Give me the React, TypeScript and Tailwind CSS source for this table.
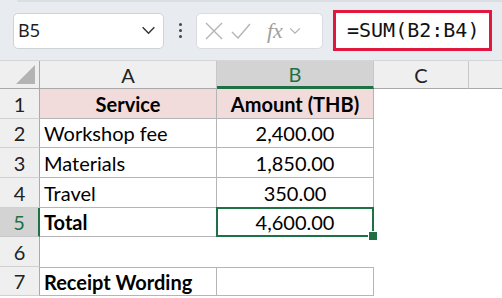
import React from "react";

const CELL_FONT = { fontFamily: "Lato, 'Noto Sans', sans-serif" };

type Row = {
  n: number;
  h: string;
  a?: string;
  b?: string;
  bold?: boolean;
  head?: boolean;
  bordered: boolean;
  selected?: boolean;
  topBorder?: boolean;
};

const rows: Row[] = [
  { n: 1, h: "h-[30px]", a: "Service", b: "Amount (THB)", bold: true, head: true, bordered: true },
  { n: 2, h: "h-[29px]", a: "Workshop fee", b: "2,400.00", bordered: true },
  { n: 3, h: "h-[30px]", a: "Materials", b: "1,850.00", bordered: true },
  { n: 4, h: "h-[30px]", a: "Travel", b: "350.00", bordered: true },
  { n: 5, h: "h-[29px]", a: "Total", b: "4,600.00", bold: true, bordered: true, selected: true },
  { n: 6, h: "h-[30px]", bordered: false },
  { n: 7, h: "h-[29px]", a: "Receipt Wording", b: "", bold: true, bordered: true, topBorder: true },
];

function Chevron({ className }: { className?: string }) {
  return (
    <svg viewBox="0 0 16 10" className={className} fill="none" stroke="currentColor" strokeWidth="1.6">
      <path d="M1.5 1.5 L8 8 L14.5 1.5" />
    </svg>
  );
}

function FormulaBar() {
  return (
    <div className="relative h-[61px] bg-[#e8ebef] flex items-center pl-[13px] border-b border-[#d4d6d9]">
      <div className="absolute top-0 left-[17px] right-0 h-[2px] bg-[#dadde1] rounded-bl-[4px]" />
      {/* name box */}
      <div className="w-[151px] h-[36px] bg-white border border-[#cfd2d6] rounded-[5px] flex items-center pl-[4px] pr-[7px] mt-[1px]">
        <span className="text-[18px] text-[#1f1f1f] flex-1" style={{ fontFamily: "'Noto Sans', sans-serif" }}>
          B5
        </span>
        <Chevron className="w-[15px] h-[9px] text-[#333]" />
      </div>
      {/* dots */}
      <div className="w-[32px] flex flex-col items-center gap-[3px] mt-[1px]">
        <span className="w-[3px] h-[3px] rounded-full bg-[#444]" />
        <span className="w-[3px] h-[3px] rounded-full bg-[#444]" />
        <span className="w-[3px] h-[3px] rounded-full bg-[#444]" />
      </div>
      {/* cancel / enter / fx box */}
      <div className="w-[127px] h-[36px] bg-white border border-[#d9dbde] rounded-[5px] flex items-center pl-[8px] text-[#b4b4b4] mt-[1px]">
        <svg viewBox="0 0 18 18" className="w-[18px] h-[18px]" stroke="currentColor" strokeWidth="1.4" fill="none">
          <path d="M1 1 L17 17 M17 1 L1 17" />
        </svg>
        <svg viewBox="0 0 20 16" className="w-[20px] h-[16px] ml-[8px]" stroke="currentColor" strokeWidth="1.4" fill="none">
          <path d="M1 9 L7 15 L19 1" />
        </svg>
        <span
          className="ml-[16px] text-[22px] italic text-[#a0a0a0] leading-none"
          style={{ fontFamily: "'Liberation Serif', serif" }}
        >
          fx
        </span>
        <Chevron className="ml-[6px] w-[12px] h-[8px] text-[#b0b0b0]" />
      </div>
      {/* formula input with highlight */}
      <div className="ml-[10px] w-[159px] h-[41px] bg-white border-[3px] border-[#e0173f] flex items-center pl-[11px]">
        <span className="text-[20px] text-[#111]" style={{ fontFamily: "'DejaVu Sans Mono', monospace" }}>
          =SUM(B2:B4)
        </span>
      </div>
    </div>
  );
}

function ColumnHeaders() {
  return (
    <div className="flex h-[28px] text-[20px] text-[#222]" style={CELL_FONT}>
      <div className="w-[40px] shrink-0 bg-[#efefef] border-r border-b border-[#a9a9a9] flex items-end justify-end pr-[4px] pb-[4px]">
        <svg viewBox="0 0 20 20" className="w-[19px] h-[19px]">
          <path d="M20 0 L20 20 L0 20 Z" fill="#b3b3b3" />
        </svg>
      </div>
      <div className="w-[177px] shrink-0 bg-[#efefef] border-r border-b border-[#c8c8c8] border-b-[#a9a9a9] flex items-center justify-center">
        A
      </div>
      <div className="w-[157px] shrink-0 bg-[#d3d3d3] border-r border-[#c8c8c8] border-b-[3px] border-b-[#1e7145] flex items-center justify-center text-[#1e7145]">
        B
      </div>
      <div className="w-[95px] shrink-0 bg-[#efefef] border-r border-b border-[#c8c8c8] border-b-[#a9a9a9] flex items-center justify-center">
        C
      </div>
      <div className="flex-1 bg-[#efefef] border-b border-[#a9a9a9]" />
    </div>
  );
}

function SheetRow({ r }: { r: Row }) {
  const cellBorder = r.bordered ? "border-r border-b border-[#b5b5b5]" : "";
  const top = r.topBorder ? "border-t border-[#b5b5b5]" : "";
  const fill = r.head ? "bg-[#f2dcdb]" : "bg-white";
  const weight = r.bold ? "font-bold" : "font-normal";
  return (
    <div className={`flex ${r.h} text-[20px] text-black`} style={CELL_FONT}>
      <div
        className={
          r.selected
            ? "w-[40px] shrink-0 bg-[#d3d3d3] border-b border-[#c8c8c8] border-r-[2px] border-r-[#1e7145] text-[#1e7145] flex items-center justify-center"
            : "w-[40px] shrink-0 bg-[#efefef] border-b border-[#d0d0d0] border-r border-r-[#a9a9a9] text-[#222] flex items-center justify-center"
        }
      >
        {r.n}
      </div>
      <div
        className={`w-[177px] shrink-0 ${fill} ${cellBorder} ${top} ${weight} flex items-center ${
          r.head ? "justify-center" : "pl-[4px]"
        }`}
      >
        {r.a}
      </div>
      <div className={`relative w-[157px] shrink-0 ${fill} ${cellBorder} ${top} ${weight} flex items-center justify-center`}>
        {r.head ? r.b : <span className="font-normal">{r.b}</span>}
        {r.selected && (
          <>
            <div className="absolute z-10 -left-[1px] -top-[1px] -right-[1px] -bottom-[1px] border-[2px] border-[#1e7145]" />
            <div className="absolute z-20 -right-[5px] -bottom-[5px] w-[10px] h-[10px] bg-[#1e7145] border border-white" />
          </>
        )}
      </div>
      <div className="flex-1 bg-white" />
    </div>
  );
}

export default function App() {
  return (
    <div className="w-[502px] h-[298px] overflow-hidden bg-white">
      <FormulaBar />
      <ColumnHeaders />
      {rows.map((r) => (
        <SheetRow key={r.n} r={r} />
      ))}
    </div>
  );
}
